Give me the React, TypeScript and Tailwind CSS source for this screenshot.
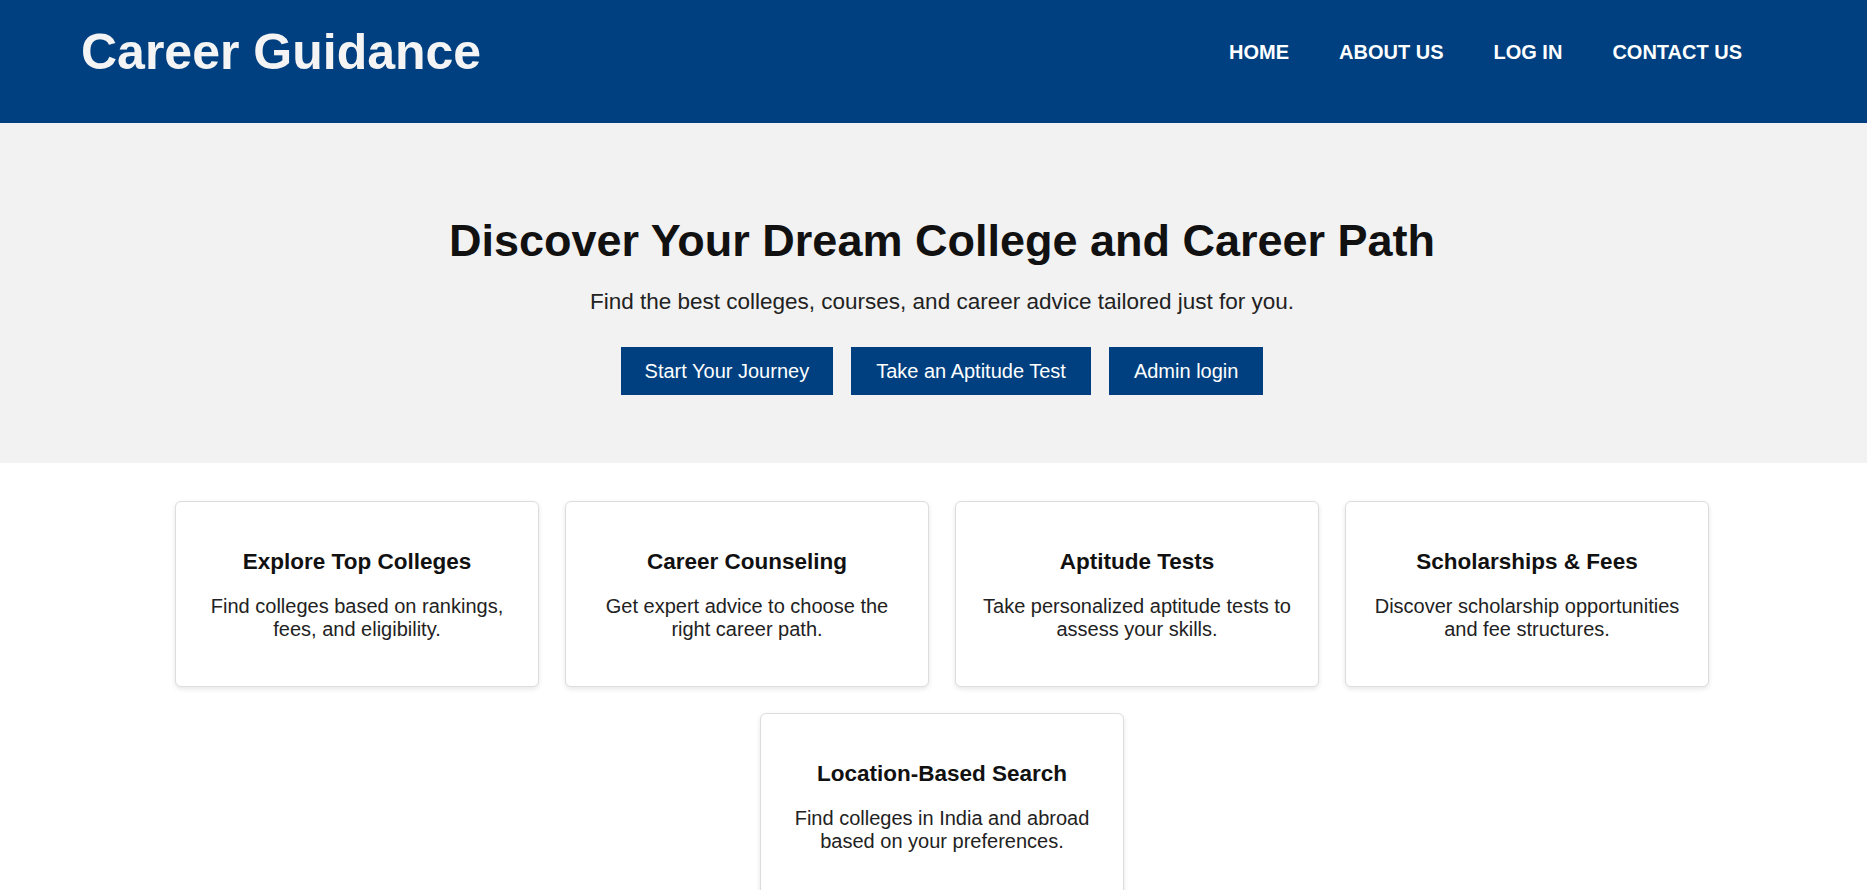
import React from "react";

const cards = [
  { title: "Explore Top Colleges", desc: "Find colleges based on rankings, fees, and eligibility." },
  { title: "Career Counseling", desc: "Get expert advice to choose the right career path." },
  { title: "Aptitude Tests", desc: "Take personalized aptitude tests to assess your skills." },
  { title: "Scholarships & Fees", desc: "Discover scholarship opportunities and fee structures." },
  { title: "Location-Based Search", desc: "Find colleges in India and abroad based on your preferences." },
];

export default function App() {
  return (
    <div className="min-h-screen bg-white font-['Liberation_Sans',Arial,sans-serif] text-black">
      <header className="flex h-[123px] items-center justify-between bg-[#004080] pb-[18px] pl-[81px] pr-[125px]">
        <h1 className="text-[50px] font-bold leading-[57px] text-[#f4f4f4]">Career Guidance</h1>
        <nav className="flex items-center gap-[50px] text-[20px] font-bold leading-[23px] text-white">
          <a href="#">HOME</a>
          <a href="#">ABOUT US</a>
          <a href="#">LOG IN</a>
          <a href="#">CONTACT US</a>
        </nav>
      </header>

      <section className="flex flex-col items-center bg-[#f2f2f2] pb-[68px] pl-[17px] pt-[92px] text-center">
        <h2 className="text-[45px] font-bold leading-[52px] text-[#111]">
          Discover Your Dream College and Career Path
        </h2>
        <p className="mt-[22px] text-[22.5px] leading-[26px] text-[#222]">
          Find the best colleges, courses, and career advice tailored just for you.
        </p>
        <div className="mt-[32px] flex gap-[18px]">
          <button className="flex h-[48px] items-center bg-[#004080] px-[24px] text-[20px] leading-[23px] text-white">
            Start Your Journey
          </button>
          <button className="flex h-[48px] items-center bg-[#004080] px-[25px] text-[20px] leading-[23px] text-white">
            Take an Aptitude Test
          </button>
          <button className="flex h-[48px] items-center bg-[#004080] px-[25px] text-[20px] leading-[23px] text-white">
            Admin login
          </button>
        </div>
      </section>

      <section className="flex flex-wrap justify-center gap-x-[26px] gap-y-[26px] pb-[40px] pl-[17px] pt-[38px]">
        {cards.map((c) => (
          <div
            key={c.title}
            className="w-[364px] rounded-[6px] border border-[#dddddd] bg-white px-[22px] pb-[45px] pt-[47px] text-center shadow-[0_2px_5px_rgba(0,0,0,0.1)]"
          >
            <h3 className="text-[22.5px] font-bold leading-[26px] text-[#111]">{c.title}</h3>
            <p className="mt-[20px] text-[20px] leading-[23px] text-[#222]">{c.desc}</p>
          </div>
        ))}
      </section>
    </div>
  );
}
